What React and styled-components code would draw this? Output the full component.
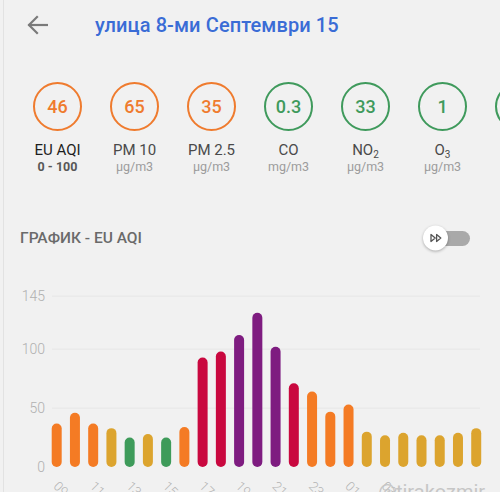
import React from 'react';
import styled, { createGlobalStyle } from 'styled-components';

const ORANGE = '#ef7b2e';
const GREEN = '#3f9a5c';

const BAR = {
  o: '#f47b24',
  g: '#dca42e',
  e: '#3e9b5a',
  r: '#c9083f',
  p: '#7e1c80',
};

const metrics = [
  { value: '46', label: 'EU AQI', sub: '0 - 100', color: ORANGE, main: true },
  { value: '65', label: 'PM 10', sub: 'μg/m3', color: ORANGE },
  { value: '35', label: 'PM 2.5', sub: 'μg/m3', color: ORANGE },
  { value: '0.3', label: 'CO', sub: 'mg/m3', color: GREEN },
  { value: '33', label: <>NO<sub>2</sub></>, sub: 'μg/m3', color: GREEN },
  { value: '1', label: <>O<sub>3</sub></>, sub: 'μg/m3', color: GREEN },
  { value: '4', label: <>SO<sub>2</sub></>, sub: 'μg/m3', color: GREEN },
];

const bars = [
  [37, 'o'], [46, 'o'], [37, 'o'], [33, 'g'], [25, 'e'], [28, 'g'],
  [25, 'e'], [34, 'o'], [93, 'r'], [98, 'r'], [112, 'p'], [131, 'p'],
  [102, 'p'], [71, 'r'], [64, 'o'], [47, 'o'], [53, 'o'], [30, 'g'],
  [27, 'g'], [29, 'g'], [27, 'g'], [27, 'g'], [29, 'g'], [33, 'g'],
];

const GlobalStyle = createGlobalStyle`
  html, body {
    margin: 0;
    padding: 0;
    background: #f1f1f1;
  }
  body {
    font-family: Roboto, "Noto Sans", sans-serif;
    overflow: hidden;
  }
`;

const Page = styled.div`
  width: 500px;
  height: 492px;
  overflow: hidden;
  background: linear-gradient(to right, #f1f1f1 3px, #e2e2e2 3px, #e2e2e2 4px, #f1f1f1 4px);
`;

const Header = styled.header`
  height: 50px;
  display: flex;
  align-items: center;
  padding-left: 27px;
  gap: 47px;
`;

const Title = styled.h1`
  margin: 0;
  font-size: 20px;
  font-weight: 500;
  color: #3a6cd6;
  letter-spacing: 0.1px;
`;

const MetricsRow = styled.div`
  display: flex;
  padding-left: 19px;
  margin-top: 32px;
  white-space: nowrap;
`;

const Metric = styled.div`
  flex: 0 0 77px;
  display: flex;
  flex-direction: column;
  align-items: center;
`;

const Ring = styled.div`
  width: 49px;
  height: 49px;
  box-sizing: border-box;
  border: 2.5px solid ${p => p.$color};
  border-radius: 50%;
  display: flex;
  align-items: center;
  justify-content: center;
  color: ${p => p.$color};
  font-size: 18px;
  font-weight: 500;
`;

const Label = styled.div`
  margin-top: 10px;
  font-size: 15px;
  line-height: 18px;
  color: ${p => (p.$main ? '#1e1e1e' : '#4a4a4a')};

  sub {
    font-size: 10px;
    line-height: 0;
    vertical-align: -3px;
  }
`;

const Sub = styled.div`
  font-size: 12.5px;
  line-height: 15px;
  font-weight: ${p => (p.$main ? 700 : 400)};
  color: ${p => (p.$main ? '#575757' : '#9c9c9c')};
`;

const SectionRow = styled.div`
  margin-top: 48px;
  height: 32px;
  display: flex;
  align-items: center;
  justify-content: space-between;
  padding: 0 30px 0 20px;
`;

const SectionTitle = styled.h2`
  margin: 0;
  font-size: 15.5px;
  font-weight: 500;
  color: #6a6a6a;
`;

const Switch = styled.div`
  position: relative;
  width: 40px;
  height: 15px;
  border-radius: 8px;
  background: #a9a9a9;
`;

const Thumb = styled.div`
  position: absolute;
  left: -7px;
  top: 50%;
  transform: translateY(-50%);
  width: 25px;
  height: 25px;
  border-radius: 50%;
  background: #fff;
  box-shadow: 0 1px 3px rgba(0, 0, 0, 0.3);
  display: flex;
  align-items: center;
  justify-content: center;
`;

const Chart = styled.svg`
  display: block;
  margin-top: 26px;
`;

const BackIcon = () => (
  <svg width="21" height="20" viewBox="0 0 21 20" fill="none" stroke="#7a7a7a" strokeWidth="2.2" strokeLinecap="square">
    <path d="M20 10H2.5" />
    <path d="M10 2L2 10l8 8" />
  </svg>
);

const FastIcon = () => (
  <svg width="12" height="9" viewBox="0 0 12 9" fill="none" stroke="#555" strokeWidth="1.3" strokeLinejoin="round">
    <path d="M1 1l4.2 3.5L1 8z" />
    <path d="M6.6 1l4.2 3.5L6.6 8z" />
  </svg>
);

const TOP = 280;
const ZERO = 467 - TOP;
const K = 1.178;
const y = v => ZERO - v * K;

const AqiChart = () => (
  <Chart width="500" height="212" viewBox="0 0 500 212">
    {[145, 100, 50].map(v => (
      <line key={v} x1="52" x2="480" y1={y(v)} y2={y(v)} stroke="#e6e6e6" strokeWidth="1" />
    ))}
    {[145, 100, 50, 0].map(v => (
      <text key={v} x="45" y={y(v) + 5} textAnchor="end" fontSize="14" fontWeight="300" fill="#b0b0b0" fontFamily="Roboto, sans-serif">
        {v}
      </text>
    ))}
    {bars.map(([v, c], i) => {
      const cx = 56.7 + i * 18.24;
      return (
        <rect key={i} x={cx - 5} y={y(v)} width="10" height={v * K} rx="5" fill={BAR[c]} />
      );
    })}
    {bars.map((_, i) => {
      if (i % 2 || i > 18) return null;
      const cx = 56.7 + i * 18.24 - 4;
      const hour = String((9 + i) % 24).padStart(2, '0');
      return (
        <text key={i} transform={`translate(${cx} ${487 - TOP}) rotate(45)`} fontSize="13" fontWeight="300" fill="#b4b4b4" fontFamily="Roboto, sans-serif">
          {hour}:00
        </text>
      );
    })}
    <text x="378" y={499 - TOP} fontSize="20" fill="#c6c6c6" fontFamily="Roboto, sans-serif">@tirakozmir</text>
  </Chart>
);

export default function App() {
  return (
    <Page>
      <GlobalStyle />
      <Header>
        <BackIcon />
        <Title>улица 8-ми Септември 15</Title>
      </Header>
      <MetricsRow>
        {metrics.map((m, i) => (
          <Metric key={i}>
            <Ring $color={m.color}>{m.value}</Ring>
            <Label $main={m.main}>{m.label}</Label>
            <Sub $main={m.main}>{m.sub}</Sub>
          </Metric>
        ))}
      </MetricsRow>
      <SectionRow>
        <SectionTitle>ГРАФИК - EU AQI</SectionTitle>
        <Switch>
          <Thumb>
            <FastIcon />
          </Thumb>
        </Switch>
      </SectionRow>
      <AqiChart />
    </Page>
  );
}
